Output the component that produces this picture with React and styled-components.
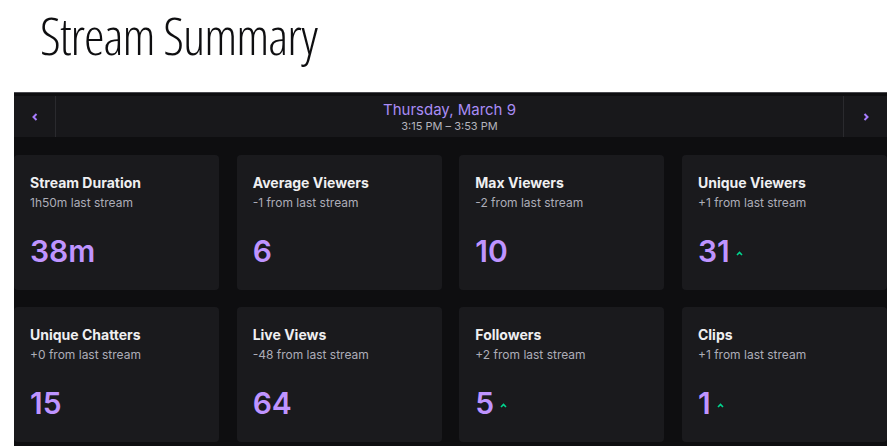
import React from "react";
import styled, { createGlobalStyle } from "styled-components";

const GlobalStyle = createGlobalStyle`
  html, body {
    margin: 0;
    padding: 0;
    background: #ffffff;
  }
  body {
    font-family: Inter, "Liberation Sans", sans-serif;
    overflow: hidden;
  }
`;

const stats = [
  { title: "Stream Duration", sub: "1h50m last stream", value: "38m" },
  { title: "Average Viewers", sub: "-1 from last stream", value: "6" },
  { title: "Max Viewers", sub: "-2 from last stream", value: "10" },
  { title: "Unique Viewers", sub: "+1 from last stream", value: "31", up: true },
  { title: "Unique Chatters", sub: "+0 from last stream", value: "15" },
  { title: "Live Views", sub: "-48 from last stream", value: "64" },
  { title: "Followers", sub: "+2 from last stream", value: "5", up: true },
  { title: "Clips", sub: "+1 from last stream", value: "1", up: true },
];

const Chevron = ({ dir }) => (
  <svg width="6" height="8" viewBox="0 0 6 8">
    <polyline
      points={dir === "left" ? "4.5,1 1.5,4 4.5,7" : "1.5,1 4.5,4 1.5,7"}
      fill="none"
      stroke="#a77cff"
      strokeWidth="2"
    />
  </svg>
);

const UpCaret = () => (
  <svg width="7" height="5" viewBox="0 0 7 5">
    <polyline points="1,4 3.5,1.5 6,4" fill="none" stroke="#00d68f" strokeWidth="1.6" />
  </svg>
);

const App = () => {
  return (
    <>
      <GlobalStyle />
      <Page>
        <Heading>Stream Summary</Heading>
        <Panel>
          <DateBar>
            <NavButton side="left">
              <Chevron dir="left" />
            </NavButton>
            <DateInfo>
              <DateTitle>Thursday, March 9</DateTitle>
              <DateTime>3:15 PM – 3:53 PM</DateTime>
            </DateInfo>
            <NavButton side="right">
              <Chevron dir="right" />
            </NavButton>
          </DateBar>
          <Grid>
            {stats.map((s) => (
              <Card key={s.title}>
                <CardTitle>{s.title}</CardTitle>
                <CardSub>{s.sub}</CardSub>
                <ValueRow>
                  <Value>{s.value}</Value>
                  {s.up && (
                    <Trend>
                      <UpCaret />
                    </Trend>
                  )}
                </ValueRow>
              </Card>
            ))}
          </Grid>
        </Panel>
      </Page>
    </>
  );
};

export default App;

const Page = styled.div`
  width: 893px;
  height: 446px;
  padding-left: 14px;
  box-sizing: border-box;
`;

const Heading = styled.h1`
  margin: 0;
  padding: 4px 0 0 26px;
  height: 92px;
  box-sizing: border-box;
  font-family: "Open Sans", sans-serif;
  font-stretch: 75%;
  font-weight: 300;
  font-size: 52px;
  line-height: 62px;
  color: #0e0e10;
  letter-spacing: -1px;
`;

const Panel = styled.div`
  width: 873px;
  background: #0e0e10;
  border-top: 1px solid #4a4a4f;
  padding-top: 3px;
  padding-bottom: 18px;
`;

const DateBar = styled.div`
  display: flex;
  height: 41px;
  background: #18181b;
`;

const NavButton = styled.div`
  width: 41px;
  display: flex;
  align-items: center;
  justify-content: center;
  ${({ side }) =>
    side === "left"
      ? "border-right: 1px solid #2a2a2e;"
      : "border-left: 1px solid #2a2a2e; width: 43px;"}
`;

const DateInfo = styled.div`
  flex: 1;
  display: flex;
  flex-direction: column;
  align-items: center;
  justify-content: center;
`;

const DateTitle = styled.div`
  color: #a98cf5;
  font-size: 15px;
  line-height: 18px;
`;

const DateTime = styled.div`
  color: #b4b4bd;
  font-size: 11px;
  line-height: 14px;
`;

const Grid = styled.div`
  display: grid;
  grid-template-columns: repeat(4, 205px);
  justify-content: space-between;
  row-gap: 17px;
  margin-top: 18px;
`;

const Card = styled.div`
  height: 135px;
  box-sizing: border-box;
  background: #1a1a1d;
  border-radius: 4px;
  padding: 19px 16px 0;
`;

const CardTitle = styled.div`
  color: #efeff1;
  font-size: 14px;
  font-weight: 700;
  line-height: 18px;
`;

const CardSub = styled.div`
  color: #adadb8;
  font-size: 12px;
  line-height: 16px;
  margin-top: 3px;
`;

const ValueRow = styled.div`
  display: flex;
  align-items: center;
  margin-top: 22px;
`;

const Value = styled.div`
  color: #bf94ff;
  font-size: 30px;
  font-weight: 600;
  line-height: 36px;
`;

const Trend = styled.span`
  display: flex;
  margin-left: 6px;
  margin-top: 4px;
`;
